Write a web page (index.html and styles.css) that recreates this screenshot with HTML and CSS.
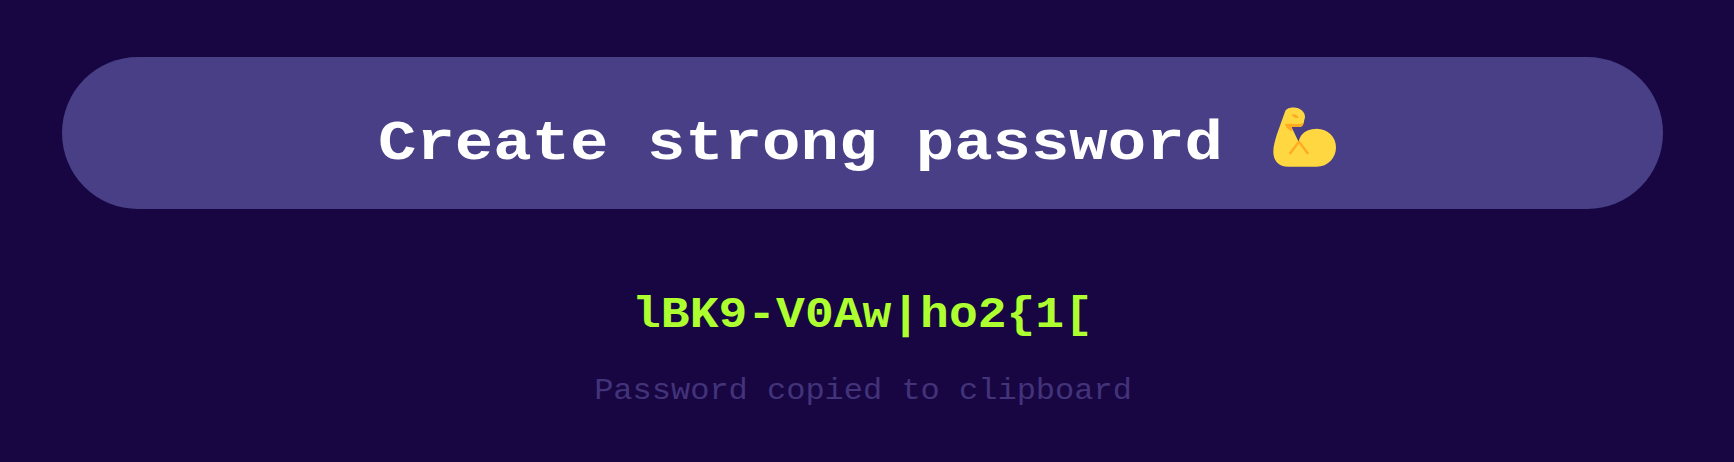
FILE: index.html
```html
<!DOCTYPE html>
<html lang="en">
<head>
<meta charset="utf-8">
<title>Password generator</title>
<link rel="stylesheet" href="styles.css">
</head>
<body>
<main class="app">
<button class="create"><span class="label">Create strong password</span>
<svg class="arm" viewBox="0 0 64 60" aria-hidden="true"><path fill="#ffd740" d="M12 4.7C13.5 1 18 .4 21 .6C27 .8 32 5 32 9.7C32 12 31 12.5 31 14.7C30 18 29 20 26 20H18.5L25.7 35C26.5 30 30 22 43.7 21.7C55 21.7 63 30 63 40.3C63 51 55 59.7 43.7 59.7H15.3C6 59.7 .3 54 .3 44.7C.3 39 2 34 3.7 28Z"/><path fill="#ffab22" d="M12 17C18 16.5 22 17.5 26 17C28 17 30 16 31 14.7C30.5 18 29 20 26 20H18.5L19.5 24C15 23.5 13 20 12 17ZM18.5 7.5C22 6.5 24 8 26 10.8C23 11.5 21 11 18.5 7.5Z"/><path fill="none" stroke="#ffab22" stroke-width="2.3" stroke-linecap="round" d="M25.6 35.2L17.2 46.2M26.4 35.2L34.6 46.2"/></svg></button>
<output class="password">lBK9-V0Aw|ho2{1[</output>
<p class="status">Password copied to clipboard</p>
</main>
</body>
</html>
```
FILE: styles.css
```css
body { margin: 0; background: #180643; font-family: "Courier New", "Liberation Mono", monospace; }
.app { display: flex; flex-direction: column; align-items: center; padding: 57px 71px 0 62px; }
.create { box-sizing: border-box; width: 100%; height: 152px; padding: 4px 10px 0 0; border: 0; border-radius: 76px; background: #483f87; color: #fff; font: bold 64px/1 "Courier New", "Liberation Mono", monospace; display: flex; align-items: center; justify-content: center; gap: 50px; }
.label { display: block; margin-top: 17px; transform: scaleY(.88); }
.arm { width: 64px; height: 60px; margin-top: 4px; }
.password { display: block; margin-top: 79px; font-weight: bold; font-size: 48px; line-height: 54px; color: #adff2f; transform: scaleY(.92); }
.status { margin: 32px 0 0; padding-left: 1px; font-size: 32px; line-height: 36px; color: #42337a; transform: scaleY(.92); }
```
